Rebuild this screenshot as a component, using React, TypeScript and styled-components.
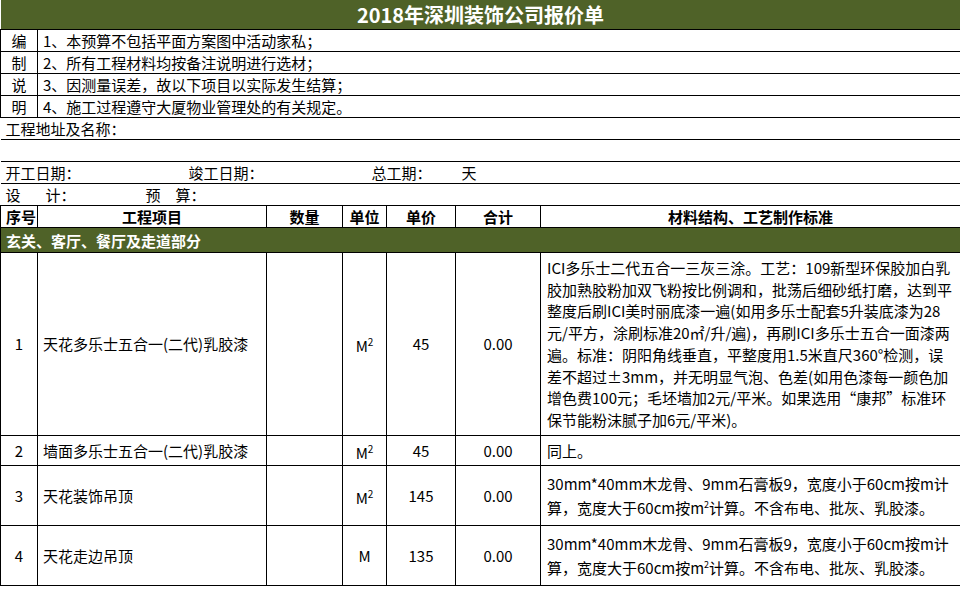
import React from 'react'
import styled, { createGlobalStyle } from 'styled-components'

const GREEN = '#4f6228'

const Global = createGlobalStyle`
  body {
    margin: 0;
    background: #fff;
    font-family: "Noto Sans CJK SC", "Liberation Sans", sans-serif;
    font-size: 15px;
    color: #000;
  }
`

const Sheet = styled.table`
  width: 960px;
  border-collapse: collapse;
  table-layout: fixed;
`

const Title = styled.td`
  background: ${GREEN};
  color: #fff;
  font-weight: bold;
  font-size: 20px;
  text-align: center;
  height: 27px;
  padding: 0;
  border-bottom: 1px solid #000;
`

const Cell = styled.td<{ $align?: string; $h?: number; $bold?: boolean }>`
  border: 1px solid #000;
  padding: 0 5px;
  height: ${p => p.$h ?? 21}px;
  text-align: ${p => p.$align ?? 'left'};
  font-weight: ${p => (p.$bold ? 'bold' : 'normal')};
  line-height: 21px;
  white-space: nowrap;
  overflow: hidden;
  vertical-align: middle;
`

const Plain = styled(Cell)`
  border-left: none;
  border-right: none;
`

const Desc = styled(Cell)`
  white-space: normal;
  line-height: 21.7px;
  padding: 4px 6px;
  text-align: left;
`

const Section = styled.td`
  background: ${GREEN};
  color: #fff;
  font-weight: bold;
  height: 24px;
  padding: 0 5px;
  border: 1px solid #000;
`

const Gap = styled.span<{ $w: number }>`
  display: inline-block;
  width: ${p => p.$w}px;
`

const M2 = () => (
  <>
    M<sup style={{ fontSize: 10 }}>2</sup>
  </>
)

const notes = [
  '1、本预算不包括平面方案图中活动家私；',
  '2、所有工程材料均按备注说明进行选材；',
  '3、因测量误差，故以下项目以实际发生结算；',
  '4、施工过程遵守大厦物业管理处的有关规定。',
]
const side = ['编', '制', '说', '明']

const rows = [
  {
    n: 1, name: '天花多乐士五合一(二代)乳胶漆', unit: <M2 />, price: 45, h: 178,
    desc: ['ICI多乐士二代五合一三灰三涂。工艺：109新型环保胶加白乳', '胶加熟胶粉加双飞粉按比例调和，批荡后细砂纸打磨，达到平', '整度后刷ICI美时丽底漆一遍(如用多乐士配套5升装底漆为28', <>元/平方，涂刷标准20㎡/升/遍)，再刷ICI多乐士五合一面漆两</>, '遍。标准：阴阳角线垂直，平整度用1.5米直尺360°检测，误', '差不超过±3mm，并无明显气泡、色差(如用色漆每一颜色加', '增色费100元；毛坯墙加2元/平米。如果选用“康邦”标准环', '保节能粉沫腻子加6元/平米)。'],
  },
  { n: 2, name: '墙面多乐士五合一(二代)乳胶漆', unit: <M2 />, price: 45, h: 25, desc: ['同上。'] },
  {
    n: 3, name: '天花装饰吊顶', unit: <M2 />, price: 145, h: 59,
    desc: ['30mm*40mm木龙骨、9mm石膏板9，宽度小于60cm按m计', <>算，宽度大于60cm按m<sup style={{ fontSize: 9 }}>2</sup>计算。不含布电、批灰、乳胶漆。</>],
  },
  {
    n: 4, name: '天花走边吊顶', unit: 'M', price: 135, h: 59,
    desc: ['30mm*40mm木龙骨、9mm石膏板9，宽度小于60cm按m计', <>算，宽度大于60cm按m<sup style={{ fontSize: 9 }}>2</sup>计算。不含布电、批灰、乳胶漆。</>],
  },
]

export default function App() {
  return (
    <>
      <Global />
      <Sheet>
        <colgroup>
          <col style={{ width: 37 }} />
          <col style={{ width: 229 }} />
          <col style={{ width: 76 }} />
          <col style={{ width: 44 }} />
          <col style={{ width: 69 }} />
          <col style={{ width: 85 }} />
          <col style={{ width: 420 }} />
        </colgroup>
        <tbody>
          <tr>
            <Title colSpan={7}>2018年深圳装饰公司报价单</Title>
          </tr>
          {notes.map((t, i) => (
            <tr key={t}>
              <Cell $align="center">{side[i]}</Cell>
              <Cell colSpan={6}>{t}</Cell>
            </tr>
          ))}
          <tr>
            <Plain colSpan={7}>工程地址及名称：</Plain>
          </tr>
          <tr>
            <Plain colSpan={7} />
          </tr>
          <tr>
            <Plain colSpan={7}>
              开工日期：<Gap $w={108} />竣工日期：<Gap $w={108} />总工期：<Gap $w={30} />天
            </Plain>
          </tr>
          <tr>
            <Plain colSpan={7}>
              设<Gap $w={25} />计：<Gap $w={70} />预<Gap $w={15} />算：
            </Plain>
          </tr>
          <tr>
            <Cell $bold>序号</Cell>
            <Cell $bold $align="center">工程项目</Cell>
            <Cell $bold $align="center">数量</Cell>
            <Cell $bold $align="center">单位</Cell>
            <Cell $bold $align="center">单价</Cell>
            <Cell $bold $align="center">合计</Cell>
            <Cell $bold $align="center">材料结构、工艺制作标准</Cell>
          </tr>
          <tr>
            <Section colSpan={7}>玄关、客厅、餐厅及走道部分</Section>
          </tr>
          {rows.map(r => (
            <tr key={r.n}>
              <Cell $align="center" $h={r.h}>{r.n}</Cell>
              <Cell>{r.name}</Cell>
              <Cell />
              <Cell $align="center">{r.unit}</Cell>
              <Cell $align="center">{r.price}</Cell>
              <Cell $align="center">0.00</Cell>
              <Desc>
                {r.desc.map((l, i) => (
                  <React.Fragment key={i}>
                    {l}
                    {i < r.desc.length - 1 && <br />}
                  </React.Fragment>
                ))}
              </Desc>
            </tr>
          ))}
        </tbody>
      </Sheet>
    </>
  )
}
